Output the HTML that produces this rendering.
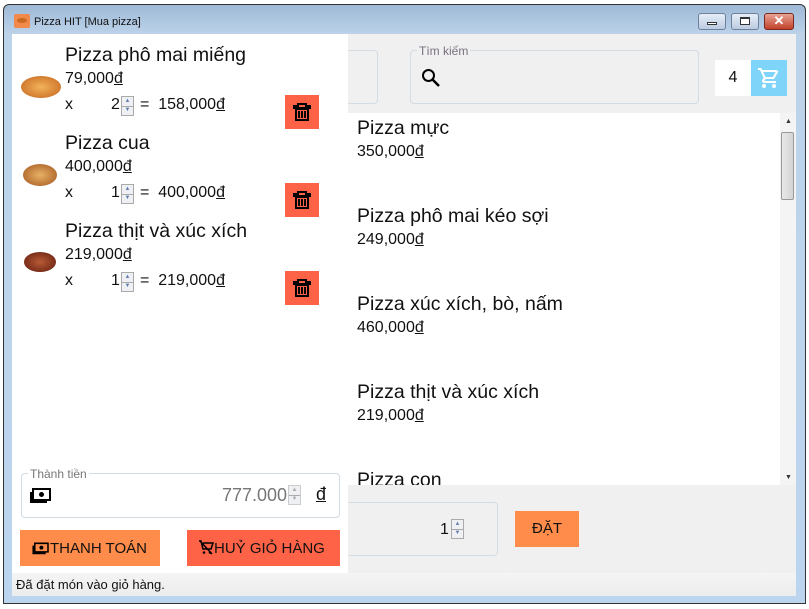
<!DOCTYPE html>
<html><head><meta charset="utf-8"><style>
*{margin:0;padding:0;box-sizing:border-box}
body{width:809px;height:609px;background:#fff;position:relative;overflow:hidden;font-family:"Liberation Sans",sans-serif;color:#111}
.a{position:absolute}
.win{left:3px;top:4px;width:803px;height:600px;border:1px solid #333;border-radius:6px 6px 0 0;background:linear-gradient(#9fb9d6,#bcd3ea 30px,#bcd5ee);}
.t20{font-size:19.5px}.t16{font-size:16px}
.spin{width:13px;height:20px;border:1px solid #aaa;background:#eef0f4;font-size:6px;color:#6a7fb0;text-align:center;line-height:9px}
.spin:after{content:"";position:absolute;left:0;right:0;top:9px;border-top:1px solid #aaa}
.del{width:34px;height:34px;background:#ff6347}
.btnw{width:28px;height:17px;border:1px solid #6d819b;border-radius:3px;background:linear-gradient(#e5eef8,#bccbe0)}
</style></head><body>
<div class="a win"></div>
<div class="a" style="left:14px;top:14px;width:16px;height:14px;background:#f0894a;border-radius:2px"></div>
<div class="a" style="left:17px;top:18px;width:10px;height:5px;background:#c96a20;border-radius:50%"></div>
<div class="a" style="left:34px;top:16px;font-size:11px;color:#111">Pizza HIT [Mua pizza]</div>
<div class="a btnw" style="left:698px;top:13px"><div class="a" style="left:8px;top:8px;width:10px;height:3px;border:1px solid #333;background:#fff"></div></div>
<div class="a btnw" style="left:731px;top:13px"><div class="a" style="left:8px;top:3px;width:10px;height:8px;border:1px solid #333;border-top-width:2px;background:#fff"></div></div>
<div class="a btnw" style="left:764px;top:13px;width:30px;background:linear-gradient(#e8a293,#c2412a);border-color:#7a2a20;color:#fff;font-size:13px;font-weight:bold;text-align:center;line-height:14px">✕</div>
<div class="a" style="left:12px;top:34px;width:784px;height:539px;background:#f0f0f0"></div>
<div class="a" style="left:12px;top:573px;width:784px;height:23px;background:linear-gradient(#f4f4f4,#ececec)"></div>
<div class="a" style="left:16px;top:577px;font-size:13px">Đã đặt món vào giỏ hàng.</div>
<div class="a" style="left:300px;top:50px;width:78px;height:54px;border:1px solid #d3dbe3;border-radius:4px"></div>
<div class="a" style="left:410px;top:50px;width:289px;height:54px;border:1px solid #d3dbe3;border-radius:4px"></div>
<div class="a" style="left:417px;top:44px;padding:0 2px;background:#f0f0f0;font-size:12px;color:#7a6f80">Tìm kiếm</div>
<svg class="a" style="left:421px;top:68px" width="20" height="20" viewBox="0 0 20 20"><circle cx="7.5" cy="7.5" r="5.5" fill="none" stroke="#000" stroke-width="2"/><path d="M11.5 11.5L18 18" stroke="#000" stroke-width="2.5"/></svg>
<div class="a" style="left:715px;top:60px;width:36px;height:36px;background:#fff;font-size:16px;text-align:center;line-height:36px">4</div>
<div class="a" style="left:751px;top:60px;width:36px;height:36px;background:#7fd4fa"></div>
<svg class="a" style="left:757px;top:66px" width="24" height="24" viewBox="0 0 24 24"><path fill="#fff" d="M7 18a2 2 0 1 0 0 4 2 2 0 0 0 0-4zm10 0a2 2 0 1 0 0 4 2 2 0 0 0 0-4zM1 2v2h2l3.6 7.6-1.4 2.4c-.7 1.3.3 3 1.8 3h12v-2H7.4l1.1-2h7.5c.8 0 1.4-.4 1.7-1l3.6-6.5L19.6 4H5.2l-.9-2H1zm5.2 4h12.4l-2.8 5H8.5z"/></svg>
<div class="a" style="left:348px;top:113px;width:432px;height:372px;background:#fff;overflow:hidden">
<div class="a t20" style="left:9px;top:4px">Pizza mực</div><div class="a t16" style="left:9px;top:30px">350,000<u>đ</u></div>
<div class="a t20" style="left:9px;top:92px">Pizza phô mai kéo sợi</div><div class="a t16" style="left:9px;top:118px">249,000<u>đ</u></div>
<div class="a t20" style="left:9px;top:180px">Pizza xúc xích, bò, nấm</div><div class="a t16" style="left:9px;top:206px">460,000<u>đ</u></div>
<div class="a t20" style="left:9px;top:268px">Pizza thịt và xúc xích</div><div class="a t16" style="left:9px;top:294px">219,000<u>đ</u></div>
<div class="a t20" style="left:9px;top:356px">Pizza con</div>
</div>
<div class="a" style="left:780px;top:113px;width:16px;height:372px;background:#f4f4f4"></div>
<div class="a" style="left:781px;top:132px;width:13px;height:68px;border:1px solid #999;border-radius:2px;background:linear-gradient(90deg,#e8e8e8,#d4d4d4)"></div>
<div class="a" style="left:785px;top:118px;font-size:7px;color:#333">▲</div>
<div class="a" style="left:785px;top:474px;font-size:7px;color:#333">▼</div>
<div class="a" style="left:330px;top:502px;width:168px;height:54px;border:1px solid #d3dbe3;border-radius:4px"></div>
<div class="a t16" style="left:440px;top:521px">1</div>
<div class="a spin" style="left:451px;top:519px">▲<br>▼</div>
<div class="a" style="left:515px;top:511px;width:64px;height:36px;background:#ff8c4a;font-size:15px;text-align:center;line-height:36px">ĐẶT</div>
<div class="a" style="left:12px;top:34px;width:336px;height:539px;background:#fff"></div>
<div class="a" style="left:21px;top:76px;width:40px;height:22px;border-radius:50%;background:radial-gradient(#f2b25a,#c4641d)"></div>
<div class="a" style="left:23px;top:164px;width:34px;height:22px;border-radius:50%;background:radial-gradient(#e8b266,#b67032 70%,#4a2a18)"></div>
<div class="a" style="left:24px;top:252px;width:32px;height:20px;border-radius:50%;background:radial-gradient(#b85a34,#7a2e1a 70%,#2b1a12)"></div>
<div class="a t20" style="left:65px;top:44px">Pizza phô mai miếng</div><div class="a t16" style="left:65px;top:70px">79,000<u>đ</u></div>
<div class="a t16" style="left:65px;top:96px">x</div><div class="a t16" style="left:111px;top:96px">2</div><div class="a spin" style="left:121px;top:96px">▲<br>▼</div><div class="a t16" style="left:140px;top:96px">=&nbsp; 158,000<u>đ</u></div>
<div class="a t20" style="left:65px;top:132px">Pizza cua</div><div class="a t16" style="left:65px;top:158px">400,000<u>đ</u></div>
<div class="a t16" style="left:65px;top:184px">x</div><div class="a t16" style="left:111px;top:184px">1</div><div class="a spin" style="left:121px;top:184px">▲<br>▼</div><div class="a t16" style="left:140px;top:184px">=&nbsp; 400,000<u>đ</u></div>
<div class="a t20" style="left:65px;top:220px">Pizza thịt và xúc xích</div><div class="a t16" style="left:65px;top:246px">219,000<u>đ</u></div>
<div class="a t16" style="left:65px;top:272px">x</div><div class="a t16" style="left:111px;top:272px">1</div><div class="a spin" style="left:121px;top:272px">▲<br>▼</div><div class="a t16" style="left:140px;top:272px">=&nbsp; 219,000<u>đ</u></div>
<div class="a del" style="left:285px;top:95px"></div><div class="a del" style="left:285px;top:183px"></div><div class="a del" style="left:285px;top:271px"></div>
<svg class="a" style="left:293px;top:103px" width="18" height="18" viewBox="0 0 18 18"><path d="M5 1h8v2h4v2H1V3h4zM3 6h12v11H3z M6 8v7 M9 8v7 M12 8v7" fill="none" stroke="#000" stroke-width="2"/></svg>
<svg class="a" style="left:293px;top:191px" width="18" height="18" viewBox="0 0 18 18"><path d="M5 1h8v2h4v2H1V3h4zM3 6h12v11H3z M6 8v7 M9 8v7 M12 8v7" fill="none" stroke="#000" stroke-width="2"/></svg>
<svg class="a" style="left:293px;top:279px" width="18" height="18" viewBox="0 0 18 18"><path d="M5 1h8v2h4v2H1V3h4zM3 6h12v11H3z M6 8v7 M9 8v7 M12 8v7" fill="none" stroke="#000" stroke-width="2"/></svg>
<div class="a" style="left:21px;top:473px;width:319px;height:45px;border:1px solid #d3dbe3;border-radius:4px"></div>
<div class="a" style="left:28px;top:467px;padding:0 2px;background:#fff;font-size:12px;color:#777">Thành tiền</div>
<svg class="a" style="left:30px;top:486px" width="22" height="18" viewBox="0 0 22 18"><path d="M3 3h17v11H3z M1 6v10h16" fill="none" stroke="#000" stroke-width="2"/><circle cx="11.5" cy="8.5" r="2.5" fill="#000"/></svg>
<div class="a" style="left:222px;top:485px;font-size:18px;color:#777">777.000</div>
<div class="a spin" style="left:288px;top:485px;border-color:#ccc;color:#aaa">▲<br>▼</div>
<div class="a" style="left:316px;top:484px;font-size:18px;color:#111;text-decoration:underline">đ</div>
<div class="a" style="left:20px;top:530px;width:140px;height:36px;background:#ff8c4a;font-size:15px;line-height:38px;padding-left:12px">
<svg style="vertical-align:-2px" width="18" height="14" viewBox="0 0 22 18"><path d="M3 3h17v11H3z M1 6v10h16" fill="none" stroke="#000" stroke-width="2"/><circle cx="11.5" cy="8.5" r="2.5" fill="#000"/></svg>THANH TOÁN</div>
<div class="a" style="left:187px;top:530px;width:153px;height:36px;background:#ff6347;font-size:15px;line-height:38px;padding-left:11px">
<svg style="vertical-align:-2px" width="16" height="16" viewBox="0 0 16 16"><path d="M1 2h2l2 8h8l2-6H5 M2 2l12 13" fill="none" stroke="#000" stroke-width="1.5"/><circle cx="6" cy="13.5" r="1.3"/><circle cx="12" cy="13.5" r="1.3"/></svg>HUỶ GIỎ HÀNG</div>
</body></html>
